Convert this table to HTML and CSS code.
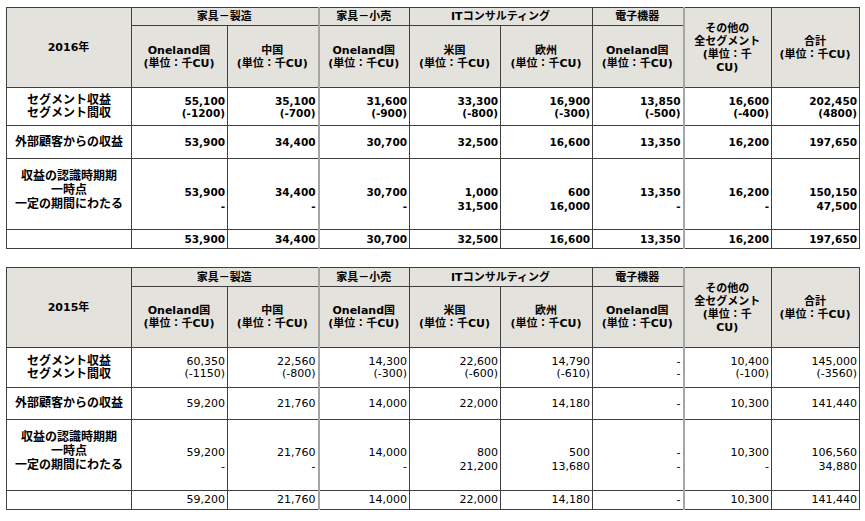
FILE: index.html
```html
<!DOCTYPE html>
<html lang="ja">
<head>
<meta charset="utf-8">
<link rel="stylesheet" href="styles.css">
</head>
<body>
<div class="page">
  <table class="seg bold-nums">
    <colgroup>
      <col class="c-label"><col class="c1"><col class="c2"><col class="c3"><col class="c4"><col class="c5"><col class="c6"><col class="c7"><col class="c8">
    </colgroup>
    <thead>
      <tr class="h1">
        <th rowspan="2" class="year">2016年</th>
        <th colspan="2">家具－製造</th>
        <th class="gl">家具－小売</th>
        <th colspan="2">ITコンサルティング</th>
        <th>電子機器</th>
        <th rowspan="2" class="gl other">その他の<br>全セグメント<br>(単位：千<br>CU)</th>
        <th rowspan="2" class="total">合計<br>(単位：千CU)</th>
      </tr>
      <tr class="h2">
        <th>Oneland国<br>(単位：千CU)</th>
        <th>中国<br>(単位：千CU)</th>
        <th class="gl">Oneland国<br>(単位：千CU)</th>
        <th>米国<br>(単位：千CU)</th>
        <th>欧州<br>(単位：千CU)</th>
        <th>Oneland国<br>(単位：千CU)</th>
      </tr>
    </thead>
    <tbody>
      <tr class="ra">
        <td class="lbl">セグメント収益<br>セグメント間収</td>
        <td>55,100<br>(-1200)</td>
        <td>35,100<br>(-700)</td>
        <td class="gl">31,600<br>(-900)</td>
        <td>33,300<br>(-800)</td>
        <td>16,900<br>(-300)</td>
        <td>13,850<br>(-500)</td>
        <td class="gl">16,600<br>(-400)</td>
        <td>202,450<br>(4800)</td>
      </tr>
      <tr class="rb">
        <td class="lbl">外部顧客からの収益</td>
        <td>53,900</td>
        <td>34,400</td>
        <td class="gl">30,700</td>
        <td>32,500</td>
        <td>16,600</td>
        <td>13,350</td>
        <td class="gl">16,200</td>
        <td>197,650</td>
      </tr>
      <tr class="rc">
        <td class="lbl">収益の認識時期期<br>一時点<br>一定の期間にわたる</td>
        <td><br>53,900<br>-</td>
        <td><br>34,400<br>-</td>
        <td class="gl"><br>30,700<br>-</td>
        <td><br>1,000<br>31,500</td>
        <td><br>600<br>16,000</td>
        <td><br>13,350<br>-</td>
        <td class="gl"><br>16,200<br>-</td>
        <td><br>150,150<br>47,500</td>
      </tr>
      <tr class="rd">
        <td class="lbl"></td>
        <td>53,900</td>
        <td>34,400</td>
        <td class="gl">30,700</td>
        <td>32,500</td>
        <td>16,600</td>
        <td>13,350</td>
        <td class="gl">16,200</td>
        <td>197,650</td>
      </tr>
    </tbody>
  </table>

  <table class="seg second">
    <colgroup>
      <col class="c-label"><col class="c1"><col class="c2"><col class="c3"><col class="c4"><col class="c5"><col class="c6"><col class="c7"><col class="c8">
    </colgroup>
    <thead>
      <tr class="h1">
        <th rowspan="2" class="year">2015年</th>
        <th colspan="2">家具－製造</th>
        <th class="gl">家具－小売</th>
        <th colspan="2">ITコンサルティング</th>
        <th>電子機器</th>
        <th rowspan="2" class="gl other">その他の<br>全セグメント<br>(単位：千<br>CU)</th>
        <th rowspan="2" class="total">合計<br>(単位：千CU)</th>
      </tr>
      <tr class="h2">
        <th>Oneland国<br>(単位：千CU)</th>
        <th>中国<br>(単位：千CU)</th>
        <th class="gl">Oneland国<br>(単位：千CU)</th>
        <th>米国<br>(単位：千CU)</th>
        <th>欧州<br>(単位：千CU)</th>
        <th>Oneland国<br>(単位：千CU)</th>
      </tr>
    </thead>
    <tbody>
      <tr class="ra ra2">
        <td class="lbl">セグメント収益<br>セグメント間収</td>
        <td>60,350<br>(-1150)</td>
        <td>22,560<br>(-800)</td>
        <td class="gl">14,300<br>(-300)</td>
        <td>22,600<br>(-600)</td>
        <td>14,790<br>(-610)</td>
        <td>-<br>-</td>
        <td class="gl">10,400<br>(-100)</td>
        <td>145,000<br>(-3560)</td>
      </tr>
      <tr class="rb rb2">
        <td class="lbl">外部顧客からの収益</td>
        <td>59,200</td>
        <td>21,760</td>
        <td class="gl">14,000</td>
        <td>22,000</td>
        <td>14,180</td>
        <td>-</td>
        <td class="gl">10,300</td>
        <td>141,440</td>
      </tr>
      <tr class="rc">
        <td class="lbl">収益の認識時期期<br>一時点<br>一定の期間にわたる</td>
        <td><br>59,200<br>-</td>
        <td><br>21,760<br>-</td>
        <td class="gl"><br>14,000<br>-</td>
        <td><br>800<br>21,200</td>
        <td><br>500<br>13,680</td>
        <td><br>-<br>-</td>
        <td class="gl"><br>10,300<br>-</td>
        <td><br>106,560<br>34,880</td>
      </tr>
      <tr class="rd">
        <td class="lbl"></td>
        <td>59,200</td>
        <td>21,760</td>
        <td class="gl">14,000</td>
        <td>22,000</td>
        <td>14,180</td>
        <td>-</td>
        <td class="gl">10,300</td>
        <td>141,440</td>
      </tr>
    </tbody>
  </table>
</div>
</body>
</html>
```

FILE: styles.css
```css
html, body {
  margin: 0;
  padding: 0;
  background: #ffffff;
}

.page {
  padding: 7px 0 0 6px;
  display: flex;
  flex-direction: column;
  gap: 18px;
  align-items: flex-start;
}

.seg {
  border-collapse: collapse;
  table-layout: fixed;
  width: 854px;
  font-family: "DejaVu Sans", "Noto Sans CJK JP", sans-serif;
  font-size: 11px;
  color: #000;
}

.c-label { width: 125px; }
.c1 { width: 96px; }
.c2 { width: 91px; }
.c3 { width: 91px; }
.c4 { width: 91px; }
.c5 { width: 92px; }
.c6 { width: 91px; }
.c7 { width: 88px; }
.c8 { width: 88px; }

.seg th,
.seg td {
  border: 1px solid #3f3f3f;
  padding: 0 2px 0 1px;
  vertical-align: middle;
}

.seg th {
  background: #e4e2dc;
  font-weight: bold;
  text-align: center;
  line-height: 13px;
  font-size: 11px;
}

.seg td {
  text-align: right;
  line-height: 12px;
}

.seg .lbl {
  text-align: center;
  font-weight: bold;
  font-size: 12px;
  line-height: 13px;
  padding: 0;
}

.bold-nums td {
  font-weight: bold;
  font-size: 10.5px;
}

.bold-nums td.lbl {
  font-size: 12px;
}

.seg .gl {
  border-left: 2px solid #a6a6a6;
}

.h1 { height: 18px; }
.h2 { height: 62px; }
.second .h1 { height: 19px; }
.second .h2 { height: 61px; }

.ra { height: 38px; }
.ra2 { height: 40px; }
.rb { height: 33px; }
.rb2 { height: 32px; }
.rc { height: 71px; }
.rd { height: 19px; }

.seg .rc td { line-height: 14px; padding-bottom: 4px; }
.seg .rc td.lbl { line-height: 14px; padding-bottom: 8px; }
```
